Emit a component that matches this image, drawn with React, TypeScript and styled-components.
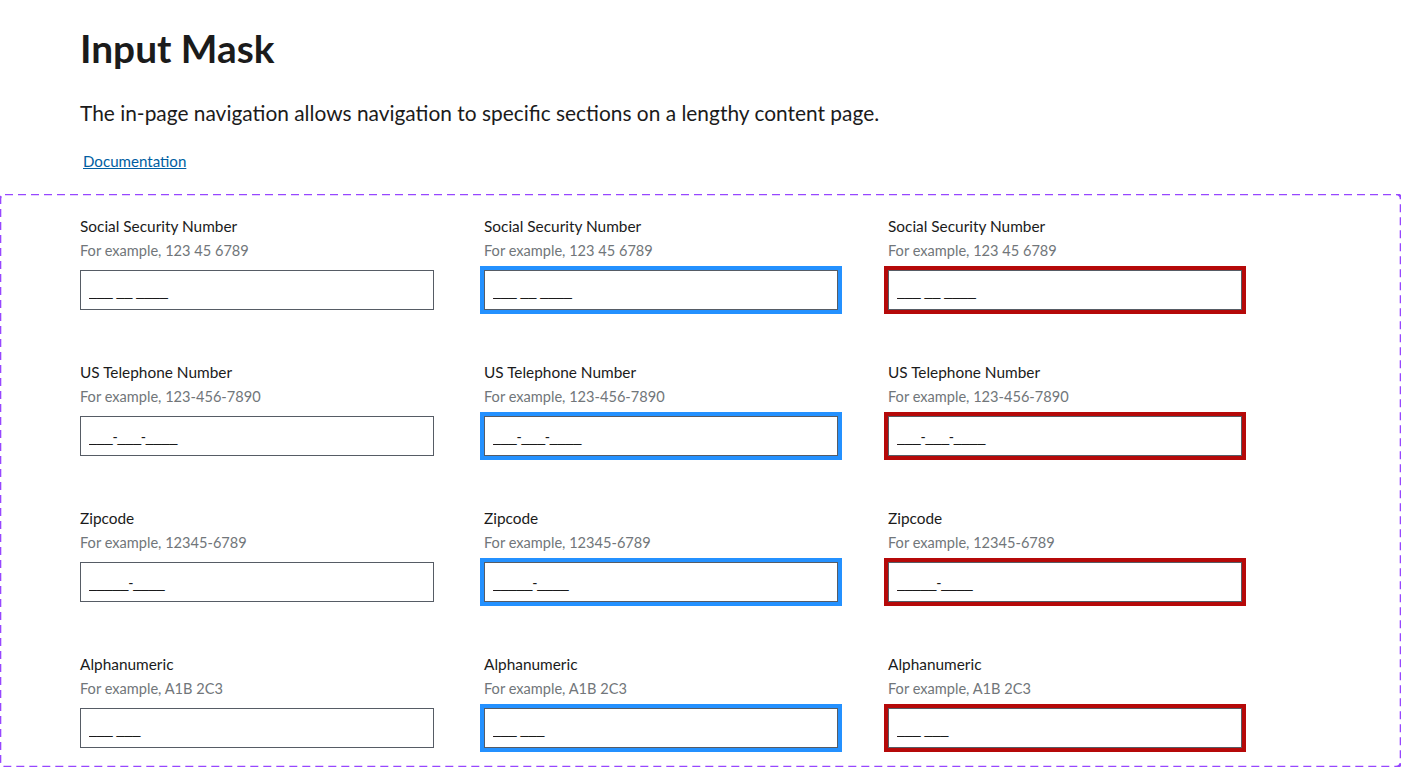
import * as React from "react";
import styled, { createGlobalStyle } from "styled-components";

const GlobalStyle = createGlobalStyle`
  html, body {
    margin: 0;
    padding: 0;
    background: #ffffff;
  }
  body {
    font-family: Lato, "Noto Sans", sans-serif;
    color: #1b1b1b;
  }
`;

// dashed frame drawn as a vector background so the dash length matches the reference
const dashedFrame = encodeURIComponent(
  `<svg xmlns="http://www.w3.org/2000/svg" width="100%" height="100%"><rect x="0" y="0" width="100%" height="100%" rx="5" ry="5" fill="none" stroke="#9747ff" stroke-width="2.6" stroke-dasharray="8 5"/></svg>`
);

const Page = styled.div`
  display: flex;
  flex-direction: column;
  padding-top: 25px;
`;

const Header = styled.header`
  display: flex;
  flex-direction: column;
  align-items: flex-start;
  padding: 0 80px;
`;

const Title = styled.h1`
  margin: 0;
  font-size: 38.8px;
  line-height: 46px;
  font-weight: 700;
  color: #1b1b1b;
`;

const Intro = styled.p`
  margin: 29px 0 0;
  font-size: 20.9px;
  line-height: 25px;
  font-weight: 400;
`;

const DocLink = styled.a`
  margin: 27px 0 0 3px;
  font-size: 15.1px;
  line-height: 18px;
  color: #005ea2;
  text-decoration: underline;
`;

const Canvas = styled.section`
  margin-top: 24px;
  background-image: url("data:image/svg+xml,${dashedFrame}");
  background-repeat: no-repeat;
  padding: 20px 80px 19px;
  display: grid;
  grid-template-columns: repeat(3, 354px);
  column-gap: 50px;
  row-gap: 50px;
`;

const Field = styled.div`
  display: flex;
  flex-direction: column;
`;

const Label = styled.label`
  font-size: 15.4px;
  line-height: 25px;
  color: #1b1b1b;
`;

const Hint = styled.span`
  font-size: 14.6px;
  line-height: 23px;
  color: #71767a;
`;

type State = "default" | "focus" | "error";

const outlineColor: Record<State, string> = {
  default: "transparent",
  focus: "#2491ff",
  error: "#b50909",
};

const MaskInput = styled.input<{ $state: State }>`
  margin-top: 8px;
  box-sizing: border-box;
  width: 354px;
  height: 40px;
  padding: 2px 8px 0;
  border: 1px solid #565c65;
  border-radius: 0;
  background: #ffffff;
  font-family: "Liberation Sans", Arial, sans-serif;
  font-size: 14.2px;
  color: #1b1b1b;
  outline: ${(p) => (p.$state === "default" ? "none" : `4px solid ${outlineColor[p.$state]}`)};
  outline-offset: 0;

  &::placeholder {
    color: #1b1b1b;
    opacity: 1;
  }
`;

const fields = [
  { label: "Social Security Number", hint: "For example, 123 45 6789", mask: "___ __ ____" },
  { label: "US Telephone Number", hint: "For example, 123-456-7890", mask: "___-___-____" },
  { label: "Zipcode", hint: "For example, 12345-6789", mask: "_____-____" },
  { label: "Alphanumeric", hint: "For example, A1B 2C3", mask: "___ ___" },
];

const states: State[] = ["default", "focus", "error"];

const App = () => {
  return (
    <Page>
      <GlobalStyle />
      <Header>
        <Title>Input Mask</Title>
        <Intro>
          The in-page navigation allows navigation to specific sections on a lengthy content page.
        </Intro>
        <DocLink href="#">Documentation</DocLink>
      </Header>
      <Canvas>
        {fields.map((f, row) =>
          states.map((s) => {
            const id = `mask-${row}-${s}`;
            return (
              <Field key={id}>
                <Label htmlFor={id}>{f.label}</Label>
                <Hint>{f.hint}</Hint>
                <MaskInput id={id} $state={s} placeholder={f.mask} readOnly />
              </Field>
            );
          })
        )}
      </Canvas>
    </Page>
  );
};

export default App;
